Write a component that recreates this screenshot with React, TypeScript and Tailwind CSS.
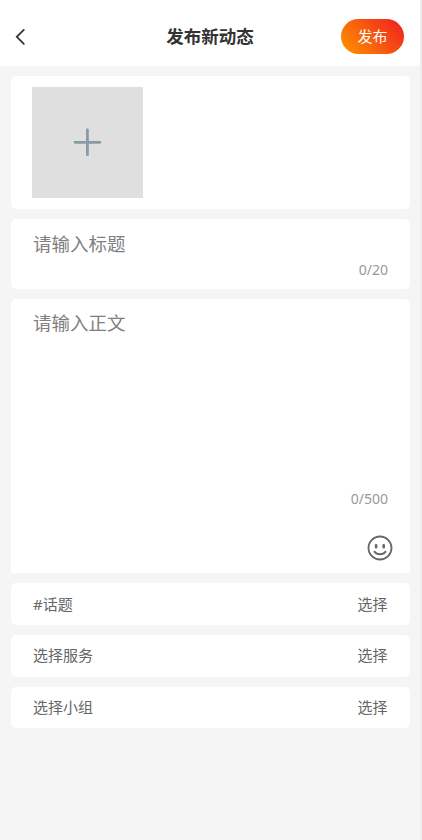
type OptionRowProps = {
  label: string;
};

function OptionRow({ label }: OptionRowProps) {
  return (
    <button className="flex h-[41.5px] w-full items-center justify-between rounded-[5px] bg-white px-[22.5px] pb-px text-[15px] leading-5 text-[#666]">
      <span>{label}</span>
      <span>选择</span>
    </button>
  );
}

function BackIcon() {
  return (
    <svg width="12" height="18" viewBox="0 0 12 18" fill="none">
      <path d="M9.8 1.9 2.8 8.8l7 7" stroke="#333" strokeWidth="1.8" strokeLinecap="round" />
    </svg>
  );
}

function PlusIcon() {
  return (
    <svg width="30" height="30" viewBox="0 0 30 30" fill="none">
      <path d="M15.4 2.9v24.8M3 15.3h24.8" stroke="#869ca5" strokeWidth="2.8" strokeLinecap="round" />
    </svg>
  );
}

function SmileIcon() {
  return (
    <svg width="26" height="26" viewBox="0 0 26 26" fill="none" stroke="#666" strokeLinecap="round">
      <circle cx="13" cy="13" r="11.5" strokeWidth="1.8" />
      <path d="M9.1 10.3v2M16.7 10.3v2" strokeWidth="2.6" />
      <path d="M7.4 16.6c2.6 3.5 8.6 3.5 11.2 0" strokeWidth="1.8" />
    </svg>
  );
}

export default function App() {
  return (
    <div className="h-[840px] w-[422px] border-r-2 border-[#eee] bg-[#f5f5f5] font-['Noto_Sans','Noto_Sans_CJK_SC',sans-serif]">
      <header className="grid h-[66px] grid-cols-3 items-center bg-white pt-[7px] pr-4 pl-[14px]">
        <button aria-label="返回">
          <BackIcon />
        </button>
        <h1 className="pb-[2px] pl-[2px] text-center text-[17.5px] leading-6 font-bold whitespace-nowrap text-[#333]">
          发布新动态
        </h1>
        <button className="h-[35px] w-[63px] justify-self-end rounded-full bg-linear-[48deg,#ff8a00_10%,#f0281e_90%] pb-[2px] text-[15px] leading-5 text-white">
          发布
        </button>
      </header>

      <main className="flex flex-col gap-[10.3px] pt-[10px] pr-[10px] pl-[10.5px]">
        <section className="h-[133px] rounded-[5px] bg-white pt-[10.5px] pl-[21px]">
          <button aria-label="添加图片" className="flex size-[111.5px] items-center justify-center bg-[#dfdfdf]">
            <PlusIcon />
          </button>
        </section>

        <section className="flex h-[69.7px] flex-col justify-between rounded-[5px] bg-white px-[22.5px] pt-[11px] pb-[9px]">
          <p className="text-[18.5px] leading-7 text-[#808080]">请输入标题</p>
          <p className="-mr-[0.5px] text-right text-[14px] leading-5 text-[#999]">0/20</p>
        </section>

        <section className="flex h-[273.7px] flex-col rounded-t-[5px] bg-white px-[22.5px] pt-[9.7px]">
          <p className="h-[180px] text-[18.5px] leading-7 text-[#808080]">请输入正文</p>
          <p className="-mr-[0.5px] text-right text-[14px] leading-5 text-[#999]">0/500</p>
          <button aria-label="表情" className="mt-[26.5px] -mr-[5px] self-end">
            <SmileIcon />
          </button>
        </section>

        <OptionRow label="#话题" />
        <OptionRow label="选择服务" />
        <OptionRow label="选择小组" />
      </main>
    </div>
  );
}
